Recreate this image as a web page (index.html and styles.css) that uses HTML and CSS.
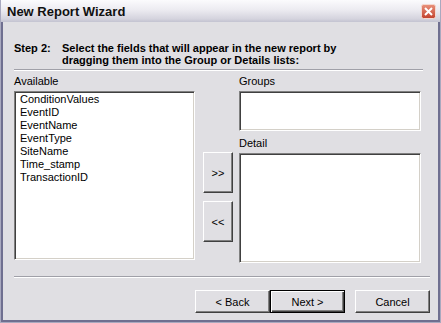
FILE: index.html
```html
<!DOCTYPE html>
<html lang="en">
<head>
    <meta charset="UTF-8">
    <title>New Report Wizard</title>
    <link rel="stylesheet" href="styles.css">
</head>
<body>

    <div class="window">
        <div class="titlebar">
            <span class="title">New Report Wizard</span>
            <span class="close">
                <svg width="15" height="15" viewBox="0 0 15 15">
                    <defs>
                        <linearGradient id="red" x1="0" y1="0" x2="0" y2="1">
                            <stop offset="0" stop-color="#e9927c"/>
                            <stop offset="1" stop-color="#c2412d"/>
                        </linearGradient>
                    </defs>
                    <rect x="0.5" y="0.5" width="14" height="14" rx="2" fill="url(#red)" stroke="#f4d8d0"/>
                    <path d="M4 4 L11 11 M11 4 L4 11" stroke="#fff" stroke-width="2"/>
                </svg>
            </span>
        </div>

        <div class="frame">
            <div class="step">
                <span class="step-no">Step 2:</span>
                <span class="step-text">Select the fields that will appear in the new report by dragging them into the Group or Details lists:</span>
            </div>
            <div class="sep sep-top"></div>

            <div class="lists">
                <div class="col-left">
                    <div class="label">Available</div>
                    <ul class="listbox available">
                        <li>ConditionValues</li>
                        <li>EventID</li>
                        <li>EventName</li>
                        <li>EventType</li>
                        <li>SiteName</li>
                        <li>Time_stamp</li>
                        <li>TransactionID</li>
                    </ul>
                </div>

                <div class="col-mid">
                    <button class="btn move">&gt;&gt;</button>
                    <button class="btn move">&lt;&lt;</button>
                </div>

                <div class="col-right">
                    <div class="label">Groups</div>
                    <ul class="listbox groups"></ul>
                    <div class="label label-detail">Detail</div>
                    <ul class="listbox detail"></ul>
                </div>
            </div>

            <div class="sep sep-bottom"></div>

            <div class="actions">
                <button class="btn nav">&lt; Back</button>
                <button class="btn nav default">Next &gt;</button>
                <button class="btn nav cancel">Cancel</button>
            </div>
        </div>
    </div>

</body>
</html>
```

FILE: styles.css
```css
body {
    margin: 0;
    padding: 0;
    font-family: "Liberation Sans", Arial, sans-serif;
    font-size: 11px;
    color: #000;
    background: #fff;
}

.window {
    width: 441px;
    height: 323px;
    box-sizing: border-box;
    border: 1px solid #a9a9bf;
    border-top: none;
    background: #e0dfe3;
    display: flex;
    flex-direction: column;
}

.titlebar {
    height: 22px;
    display: flex;
    align-items: center;
    justify-content: space-between;
    padding: 0 4px 0 6px;
    background: linear-gradient(#fbfbfd, #ecebf1 45%, #d5d4de 85%, #c3c3d1);
}

.title {
    font-size: 13px;
    font-weight: bold;
    color: #111;
    padding-top: 1px;
}

.close {
    display: flex;
    padding-top: 1px;
}

.frame {
    flex: 1;
    border: 2px solid #6f6f90;
    border-top: none;
    padding: 20px 8px 0 11px;
}

.step {
    display: flex;
    font-weight: bold;
    line-height: 12px;
}

.step-no {
    flex: none;
    width: 48px;
}

.step-text {
    width: 320px;
}

.sep {
    height: 1px;
    background: #a0a0a8;
    border-bottom: 1px solid #fff;
}

.sep-top {
    margin: 3px 7px 4px 0;
}

.lists {
    display: flex;
}

.label {
    line-height: 13px;
    margin-bottom: 3px;
}

.label-detail {
    margin-top: 6px;
}

.listbox {
    list-style: none;
    margin: 0;
    padding: 0 3px;
    background: #fff;
    border-top: 1px solid #808080;
    border-left: 1px solid #808080;
    border-right: 1px solid #fff;
    border-bottom: 1px solid #fff;
    box-shadow: inset 1px 1px #404040, inset -1px -1px #d4d0c8;
    box-sizing: border-box;
}

.listbox li {
    line-height: 13px;
    padding-left: 2px;
}

.available {
    width: 181px;
    height: 169px;
    padding-top: 1px;
}

.groups {
    width: 182px;
    height: 40px;
}

.detail {
    width: 182px;
    height: 110px;
}

.col-mid {
    display: flex;
    flex-direction: column;
    gap: 8px;
    margin: 77px 6px 0 8px;
}

.btn {
    font-family: "Liberation Sans", Arial, sans-serif;
    font-size: 11px;
    color: #000;
    background: #e0dfe3;
    border-top: 1px solid #fff;
    border-left: 1px solid #fff;
    border-right: 1px solid #404040;
    border-bottom: 1px solid #404040;
    box-shadow: inset -1px -1px #808080;
    padding: 0;
    box-sizing: border-box;
}

.move {
    width: 30px;
    height: 41px;
}

.sep-bottom {
    margin: 13px 0 12px 0;
}

.actions {
    display: flex;
    justify-content: flex-end;
}

.nav {
    width: 75px;
    height: 23px;
}

.default {
    border: 1px solid #000;
    box-shadow: inset 1px 1px #fff, inset -1px -1px #404040, inset -2px -2px #808080;
}

.cancel {
    margin-left: 10px;
}
```
